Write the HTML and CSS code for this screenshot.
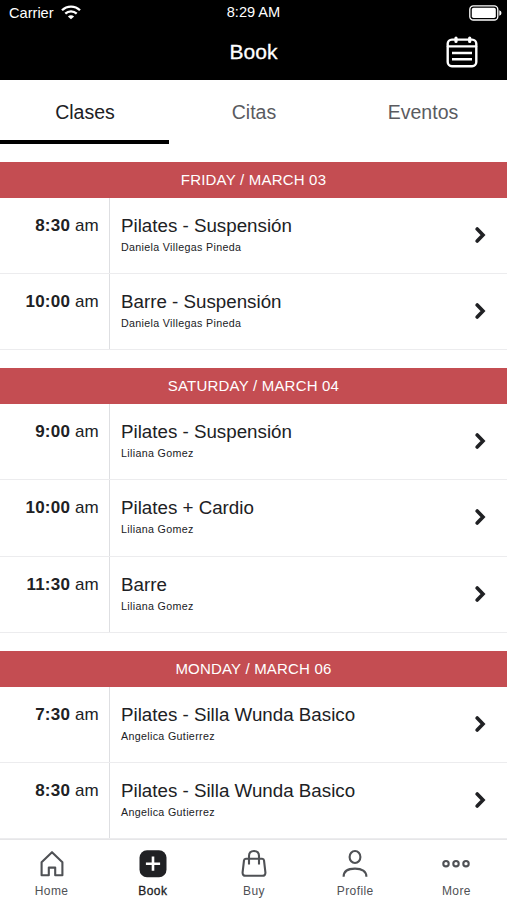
FILE: index.html
```html
<!DOCTYPE html>
<html lang="es">
<head>
    <meta charset="UTF-8">
    <meta name="viewport" content="width=device-width, initial-scale=1.0">
    <title>Book</title>
    <link rel="stylesheet" href="styles.css">
</head>
<body>
    <svg class="sprite" width="0" height="0">
        <symbol id="chevron" viewBox="0 0 12 18">
            <path d="M2.2 3 L8 9 L2.2 15" fill="none" stroke="currentColor" stroke-width="3.6" stroke-linecap="round"/>
        </symbol>
    </svg>

    <header class="header">
        <div class="status-bar">
            <div class="carrier">
                <span>Carrier</span>
                <svg class="wifi" width="20" height="15" viewBox="0 0 20 15" fill="none" stroke="#fff" stroke-width="2.3">
                    <path d="M1 5.2 C6 0.3 14 0.3 19 5.2"/>
                    <path d="M4.3 8.6 C7.5 5.6 12.5 5.6 15.7 8.6"/>
                    <path d="M10 14.3 L6.9 11.4 C8.6 9.8 11.4 9.8 13.1 11.4 Z" fill="#fff" stroke="none"/>
                </svg>
            </div>
            <span class="clock">8:29 AM</span>
            <svg class="battery" width="33" height="16" viewBox="0 0 33 16">
                <rect x="0.8" y="0.8" width="28" height="14.2" rx="3.6" fill="none" stroke="#fff" stroke-width="1.3"/>
                <rect x="2.8" y="2.8" width="24" height="10.2" rx="1.8" fill="#fff"/>
                <path d="M30.3 5.3 Q32.5 6 32.5 8 Q32.5 10 30.3 10.7 Z" fill="#fff"/>
            </svg>
        </div>
        <div class="title-bar">
            <h1>Book</h1>
            <svg class="calendar" width="32" height="32" viewBox="0 0 32 32" fill="none" stroke="#fff" stroke-width="2.4" stroke-linecap="round">
                <rect x="1.7" y="3.6" width="28.6" height="26.6" rx="4.2"/>
                <path d="M2 10.4 H30"/>
                <path d="M10 2 V5.4 M23.7 2 V5.4" stroke-width="3.2"/>
                <path d="M6 17 H26 M6 23.3 H26" stroke-linecap="butt"/>
            </svg>
        </div>
    </header>

    <nav class="tabs">
        <a class="tab active">Clases</a>
        <a class="tab">Citas</a>
        <a class="tab">Eventos</a>
    </nav>

    <main class="schedule">
        <section class="day">
            <h2>FRIDAY / MARCH 03</h2>
            <div class="class-row">
                <div class="time"><b>8:30</b> am</div>
                <div class="info">
                    <h3>Pilates - Suspensión</h3>
                    <p>Daniela Villegas Pineda</p>
                </div>
                <svg class="chevron"><use href="#chevron"/></svg>
            </div>
            <div class="class-row">
                <div class="time"><b>10:00</b> am</div>
                <div class="info">
                    <h3>Barre - Suspensión</h3>
                    <p>Daniela Villegas Pineda</p>
                </div>
                <svg class="chevron"><use href="#chevron"/></svg>
            </div>
        </section>

        <section class="day">
            <h2>SATURDAY / MARCH 04</h2>
            <div class="class-row">
                <div class="time"><b>9:00</b> am</div>
                <div class="info">
                    <h3>Pilates - Suspensión</h3>
                    <p>Liliana Gomez</p>
                </div>
                <svg class="chevron"><use href="#chevron"/></svg>
            </div>
            <div class="class-row">
                <div class="time"><b>10:00</b> am</div>
                <div class="info">
                    <h3>Pilates + Cardio</h3>
                    <p>Liliana Gomez</p>
                </div>
                <svg class="chevron"><use href="#chevron"/></svg>
            </div>
            <div class="class-row">
                <div class="time"><b>11:30</b> am</div>
                <div class="info">
                    <h3>Barre</h3>
                    <p>Liliana Gomez</p>
                </div>
                <svg class="chevron"><use href="#chevron"/></svg>
            </div>
        </section>

        <section class="day">
            <h2>MONDAY / MARCH 06</h2>
            <div class="class-row">
                <div class="time"><b>7:30</b> am</div>
                <div class="info">
                    <h3>Pilates - Silla Wunda Basico</h3>
                    <p>Angelica Gutierrez</p>
                </div>
                <svg class="chevron"><use href="#chevron"/></svg>
            </div>
            <div class="class-row">
                <div class="time"><b>8:30</b> am</div>
                <div class="info">
                    <h3>Pilates - Silla Wunda Basico</h3>
                    <p>Angelica Gutierrez</p>
                </div>
                <svg class="chevron"><use href="#chevron"/></svg>
            </div>
        </section>
    </main>

    <nav class="bottom-nav">
        <a class="nav-item">
            <svg width="30" height="30" viewBox="0 0 30 30" fill="none" stroke="currentColor" stroke-width="2.1" stroke-linejoin="round">
                <path d="M4.6 13.2 L15 3.2 L25.4 13.2 V26.3 H18.2 V18.6 H11.8 V26.3 H4.6 Z"/>
            </svg>
            <span>Home</span>
        </a>
        <a class="nav-item active">
            <svg width="30" height="30" viewBox="0 0 30 30">
                <rect x="1.5" y="1.2" width="27" height="27" rx="7.5" fill="currentColor"/>
                <path d="M15 7.6 V21.8 M7.9 14.7 H22.1" stroke="#fff" stroke-width="2.6"/>
            </svg>
            <span>Book</span>
        </a>
        <a class="nav-item">
            <svg width="30" height="30" viewBox="0 0 30 30" fill="none" stroke="currentColor" stroke-width="2.1" stroke-linejoin="round">
                <path d="M6.8 9.8 H23.2 Q24.8 9.8 25 11.4 L26.4 23.4 Q26.6 26.8 23.4 26.8 H6.6 Q3.4 26.8 3.6 23.4 L5 11.4 Q5.2 9.8 6.8 9.8 Z"/>
                <path d="M10 15.6 V7 Q10 2 15 2 Q20 2 20 7 V15.6"/>
            </svg>
            <span>Buy</span>
        </a>
        <a class="nav-item">
            <svg width="30" height="30" viewBox="0 0 30 30" fill="none" stroke="currentColor" stroke-width="2.1">
                <ellipse cx="15" cy="8" rx="5.4" ry="6"/>
                <path d="M3.6 27.8 C3.6 22.4 8 19.6 15 19.6 C22 19.6 26.4 22.4 26.4 27.8"/>
            </svg>
            <span>Profile</span>
        </a>
        <a class="nav-item">
            <svg width="30" height="30" viewBox="0 0 30 30" fill="none" stroke="currentColor" stroke-width="2.1">
                <circle cx="5" cy="14.7" r="2.7"/>
                <circle cx="15" cy="14.7" r="2.7"/>
                <circle cx="25" cy="14.7" r="2.7"/>
            </svg>
            <span>More</span>
        </a>
    </nav>
</body>
</html>
```
FILE: styles.css
```css
* {
    box-sizing: border-box;
}
body {
    font-family: "Liberation Sans", Arial, sans-serif;
    margin: 0;
    height: 900px;
    display: flex;
    flex-direction: column;
    overflow: hidden;
    background-color: #fff;
    color: #202124;
}
h1, h2, h3, p {
    margin: 0;
    font-weight: normal;
}
svg {
    display: block;
    flex: none;
}
.sprite {
    position: absolute;
}
.header {
    height: 80px;
    flex: none;
    background-color: #000;
    color: #fff;
}
.status-bar {
    display: grid;
    grid-template-columns: 1fr auto 1fr;
    align-items: center;
    height: 25px;
    padding: 0 5px 0 9px;
    font-size: 14.6px;
}
.carrier {
    display: flex;
    align-items: center;
    gap: 7px;
}
.clock {
    margin: 0 4px 2px 0;
}
.battery {
    justify-self: end;
}
.title-bar {
    display: grid;
    grid-template-columns: 1fr auto 1fr;
    align-items: center;
    height: 54px;
    padding: 0 29px;
}
.title-bar h1 {
    grid-column: 2;
    font-size: 21px;
    -webkit-text-stroke: 0.3px #fff;
}
.calendar {
    justify-self: end;
}
.tabs {
    display: flex;
    flex: none;
    height: 64px;
}
.tab {
    flex: 1;
    border-bottom: 4px solid transparent;
    padding-left: 1px;
    line-height: 65px;
    text-align: center;
    font-size: 19.5px;
    color: #5a5b5f;
}
.tab.active {
    color: #202124;
    border-bottom-color: #000;
}
.schedule {
    flex: 1;
    min-height: 0;
    overflow: hidden;
}
.day {
    padding-top: 18.2px;
}
.day h2 {
    height: 35.7px;
    line-height: 35.7px;
    background-color: #c44d52;
    color: #fff;
    text-align: center;
    font-size: 15px;
    letter-spacing: 0.2px;
}
.class-row {
    display: flex;
    height: 76.2px;
    border-bottom: 1px solid #ececee;
}
.time {
    width: 110px;
    padding: 18px 10px 0 0;
    border-right: 1px solid #dedfe2;
    text-align: right;
    font-size: 17px;
    line-height: 20px;
    letter-spacing: 0.2px;
}
.info {
    flex: 1;
    padding: 17px 0 0 11px;
}
.info h3 {
    font-size: 18.75px;
    line-height: 22px;
}
.info p {
    margin-top: 4px;
    font-size: 10.7px;
    line-height: 13px;
    letter-spacing: 0.33px;
}
.chevron {
    width: 12px;
    height: 18px;
    margin: 28px 20px 0 0;
}
.bottom-nav {
    display: flex;
    flex: none;
    height: 61px;
    padding-left: 1px;
    border-top: 1px solid #e6e6e8;
    background-color: #fff;
}
.nav-item {
    flex: 1;
    display: flex;
    flex-direction: column;
    align-items: center;
    padding-top: 9px;
    font-size: 12px;
    letter-spacing: 0.4px;
    color: #4f5155;
}
.nav-item span {
    margin-top: 5px;
    line-height: 14px;
}
.nav-item.active {
    color: #202124;
}
.nav-item.active span {
    -webkit-text-stroke: 0.3px #202124;
}
```
